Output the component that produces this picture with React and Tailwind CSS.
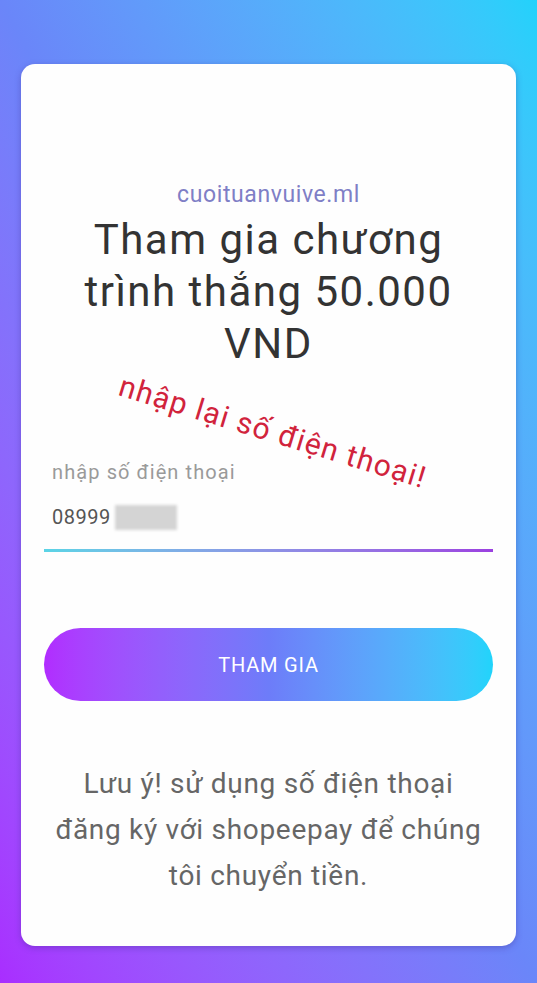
import React from "react";

const App = () => {
  return (
    <div className="h-[983px] w-full overflow-hidden bg-linear-to-tr from-[#a92dff] via-[#6a86f9] to-[#22d2fb] px-[21px] pb-[37px] pt-[64px] font-['Roboto',sans-serif]">
      <div className="relative flex h-full flex-col rounded-[14px] bg-[#fefefe] px-[23px] pt-[117px] shadow-[0_2px_6px_rgba(60,40,140,0.35)]">
        <p className="text-center text-[23px] leading-[28px] tracking-[0.6px] text-[#7f7fc6]">cuoituanvuive.ml</p>
        <h1 className="mx-auto mt-[5px] max-w-[420px] text-center text-[42px] leading-[52px] tracking-[1.5px] text-[#333333]">
          Tham gia chương trình thắng 50.000 VND
        </h1>

        <div className="mt-[89px] px-[8px] text-[20px] leading-[26px] tracking-[1.1px] text-[#9a9a9a]">nhập số điện thoại</div>
        <div className="mt-[19px] flex items-center px-[8px] text-[20px] leading-[26px] tracking-[0.5px] text-[#555555]">
          <span>08999</span>
          <span className="ml-[4px] h-[25px] w-[62px] bg-[#d4d4d4] blur-[1.5px]" />
        </div>
        <div className="mt-[19px] h-[3px] w-full bg-linear-to-r from-[#5ad4e6] to-[#9b40e0]" />

        <button className="mt-[76px] flex h-[73px] w-full items-center justify-center rounded-full bg-linear-to-r from-[#b12cff] via-[#6d7cf9] to-[#20d4fb] text-[20px] tracking-[0.8px] text-white">
          THAM GIA
        </button>

        <p className="mx-auto mt-[60px] max-w-[440px] text-center text-[28px] leading-[46px] tracking-[0.7px] text-[#666666]">
          Lưu ý! sử dụng số điện thoại đăng ký với shopeepay để chúng tôi chuyển tiền.
        </p>

        <div className="absolute left-[8px] right-0 top-[350px] flex justify-center">
          <span className="rotate-[17deg] whitespace-nowrap text-[30px] leading-[36px] tracking-[1.2px] text-[#d1233c]">
            nhập lại số điện thoại!
          </span>
        </div>
      </div>
    </div>
  );
};

export default App;
